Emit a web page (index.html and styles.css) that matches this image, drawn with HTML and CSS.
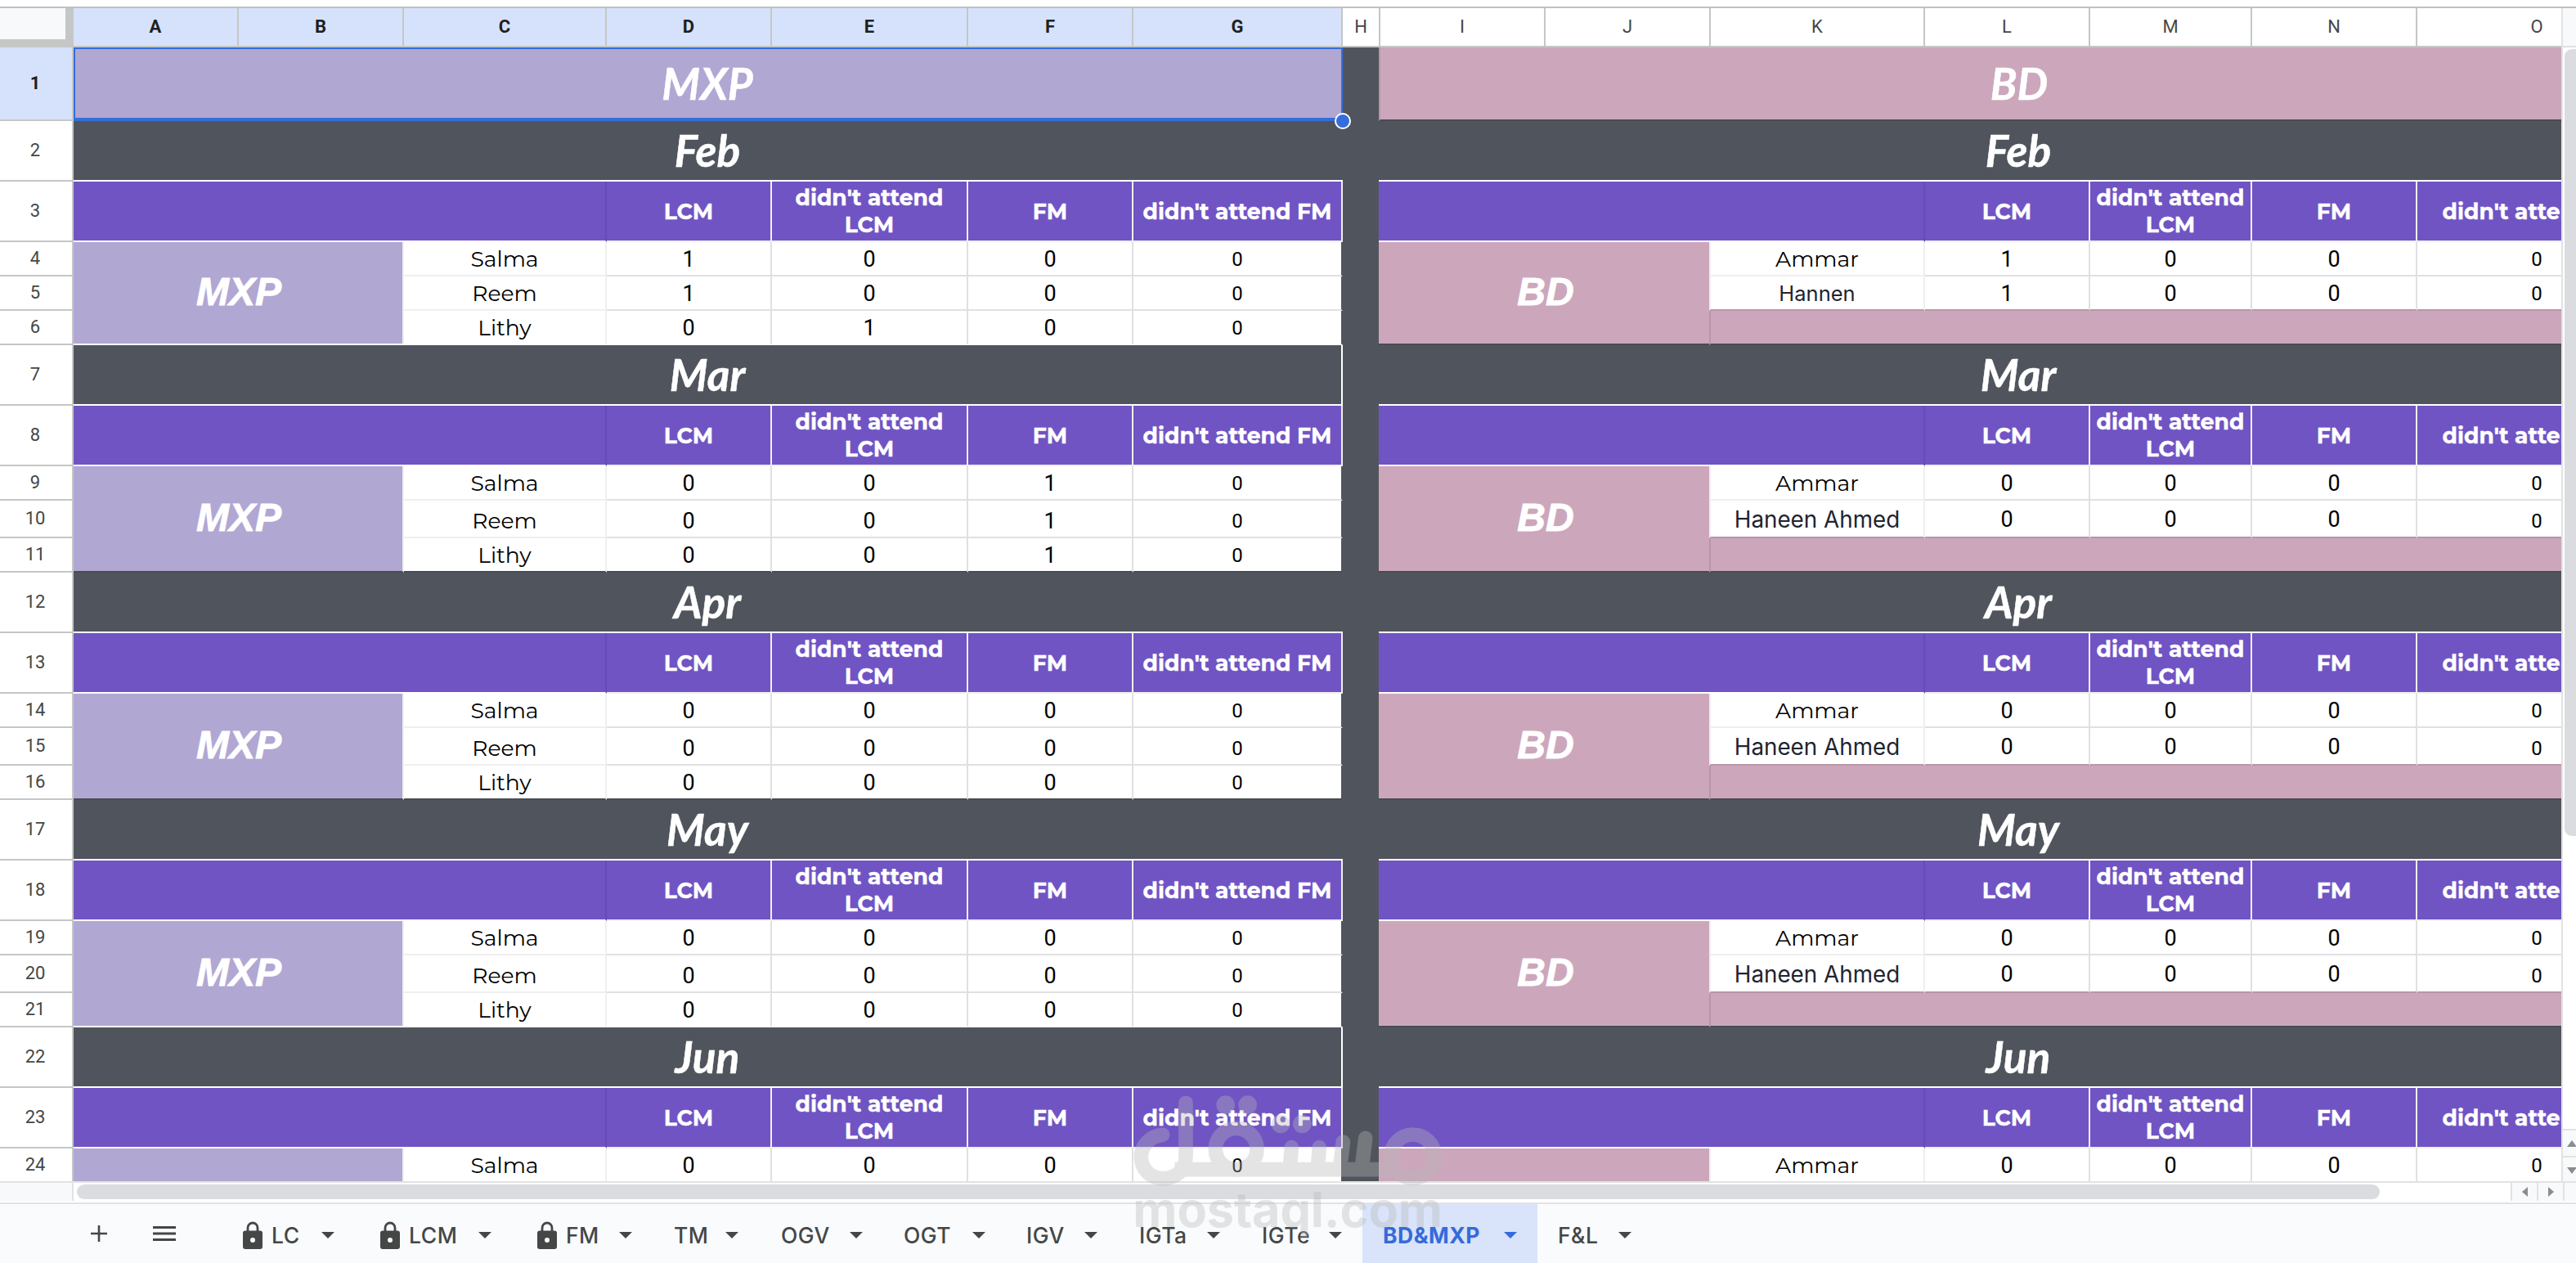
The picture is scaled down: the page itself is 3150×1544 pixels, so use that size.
FILE: index.html
```html
<!DOCTYPE html>
<html lang="en">
<head>
  <meta charset="UTF-8">
  <meta name="viewport" content="width=device-width, initial-scale=1.0">
  <title>BD&amp;MXP</title>
  <link rel="stylesheet" href="styles.css">
</head>
<body>
  <div class="app">
    <div class="sheet">
      <div class="col-heads">
        <div class="corner"></div>
        <div class="col selected">A</div>
        <div class="col selected">B</div>
        <div class="col selected">C</div>
        <div class="col selected">D</div>
        <div class="col selected">E</div>
        <div class="col selected">F</div>
        <div class="col selected">G</div>
        <div class="col">H</div>
        <div class="col">I</div>
        <div class="col">J</div>
        <div class="col">K</div>
        <div class="col">L</div>
        <div class="col">M</div>
        <div class="col">N</div>
        <div class="col">O</div>
      </div>
      <div class="grid-body">
        <div class="row-heads" id="row-heads"></div>
        <div class="table mxp" id="mxp">
          <div class="title">MXP<span class="handle"></span></div>
        </div>
        <div class="divider"></div>
        <div class="table bd" id="bd">
          <div class="title">BD</div>
        </div>
      </div>
    </div>
    <div class="v-scroll">
      <div class="v-top"></div>
      <div class="v-track"><div class="v-thumb"></div></div>
      <div class="v-btn"><svg width="12" height="8" viewBox="0 0 12 8"><path d="M6 0l6 8H0z" fill="#8a8d8f"/></svg></div>
      <div class="v-btn"><svg width="12" height="8" viewBox="0 0 12 8"><path d="M6 8l6-8H0z" fill="#8a8d8f"/></svg></div>
    </div>
  </div>

  <div class="h-scroll">
    <div class="h-corner"></div>
    <div class="h-track"><div class="h-thumb"></div></div>
    <div class="h-btn"><svg width="7" height="12" viewBox="0 0 7 12"><path d="M0 6l7-6v12z" fill="#8a8d8f"/></svg></div>
    <div class="h-btn"><svg width="7" height="12" viewBox="0 0 7 12"><path d="M7 6L0 0v12z" fill="#8a8d8f"/></svg></div>
    <div class="h-end"></div>
  </div>

  <div class="tabs">
    <svg class="plus" width="20" height="20" viewBox="0 0 20 20"><path d="M10 0v20M0 10h20" stroke="#444746" stroke-width="2.6"/></svg>
    <svg class="menu" width="28" height="18" viewBox="0 0 28 18"><path d="M0 1.5h28M0 9h28M0 16.5h28" stroke="#444746" stroke-width="3"/></svg>
    <div class="tab-list" id="tab-list"></div>
  </div>

  <svg class="watermark" width="460" height="244" viewBox="0 0 1380 732">
    <g opacity="0.36" fill="none" stroke="#b7b7b7" stroke-width="53">
      <path d="M245 262C198 266 166 302 166 343C166 388 202 422 246 422C296 422 330 388 330 342V145" stroke-linecap="round"/>
      <path d="M290 389H1110"/>
      <circle cx="515" cy="314" r="76"/>
      <path d="M718 308L712 385M820 308L814 385M907 288L896 385M989 274L976 385" stroke-linecap="round"/>
      <circle cx="1163" cy="341" r="80"/>
      <g fill="#b7b7b7" stroke="none">
        <circle cx="476" cy="152" r="34"/>
        <circle cx="557" cy="152" r="34"/>
        <circle cx="678" cy="222" r="34"/>
        <circle cx="757" cy="222" r="34"/>
        <text x="136" y="600" textLength="1136">mostaql.com</text>
      </g>
    </g>
  </svg>

  <script src="script.js"></script>
</body>
</html>
```
FILE: styles.css
```css
:root {
  --line: #c4c7c5;
  --grid: #e0e0e2;
  --soft: #efefef;
  --dark: #50555d;
  --dark-line: #484c53;
  --purple: #7054c4;
  --purple-line: #664bb5;
  --lilac: #b1a7d3;
  --pink: #cca7bc;
  --pink-line: #b896a9;
  --blue: #356ddb;
  --text: #444746;
}
* { box-sizing: border-box; }
body { margin: 0; width: 3150px; height: 1544px; overflow: hidden; background: #fff; font-family: Roboto, Arial, sans-serif; color: var(--text); position: relative; }
.app { display: flex; height: 1438px; margin-top: 8px; border-top: 2px solid #c0c0c0; }
.sheet { width: 3132px; overflow: hidden; display: flex; flex-direction: column; }

.col-heads { display: grid; grid-template-columns: 90px 202px 202px 248px 202px 240px 202px 256px 46px 202px 202px 262px 202px 198px 202px 294px; width: 3250px; height: 48px; flex: none; }
.col { border-right: 2px solid var(--line); border-bottom: 2px solid var(--line); display: flex; align-items: center; justify-content: center; font-size: 22px; padding-bottom: 1px; }
.col.selected { background: #d6e2fb; color: #1f1f1f; font-weight: 700; }
.corner { background: #f8f9fa; border-right: 10px solid var(--line); border-bottom: 10px solid var(--line); }

.grid-body { display: flex; width: 3250px; height: 1388px; overflow: hidden; }
.row-heads { width: 90px; flex: none; border-right: 2px solid var(--line); }
.row-head { height: 42px; border-bottom: 2px solid var(--line); display: flex; align-items: center; justify-content: center; font-size: 22px; padding-bottom: 1px; padding-right: 2px; }
.row-head.first { height: 90px; background: #d6e2fb; color: #1f1f1f; font-weight: 700; }
.row-head.tall { height: 74px; }
.row-head.mid { height: 46px; }
.divider { width: 44px; background: var(--dark); flex: none; }

.table { flex: none; }
.mxp { width: 1552px; background: var(--dark); }
.bd { width: 1564px; background: var(--dark); }
.title, .month { display: flex; align-items: center; justify-content: center; color: #fff; font-family: Lato, sans-serif; font-weight: 700; font-style: italic; font-size: 53.3px; line-height: 1; -webkit-text-stroke: 0.5px #fff; }
.title { height: 90px; padding-bottom: 1px; }
.mxp .title { background: var(--lilac); border: 2px solid var(--blue); border-bottom-width: 4px; position: relative; padding: 0 2px 0 0; }
.bd .title { background: var(--pink); border-bottom: 2px solid var(--dark-line); border-left: 2px solid var(--pink-line); }
.handle { position: absolute; right: -12px; bottom: -14px; width: 20px; height: 20px; border-radius: 50%; background: var(--blue); border: 2px solid #fff; }
.month { height: 74px; background: var(--dark); border-bottom: 2px solid #fff; padding-right: 2px; }
.bd .month { padding: 0; }

.block { display: grid; grid-template-rows: 74px 74px 42px 46px 42px; }
.block.even { grid-template-rows: 74px 74px 42px 42px 42px; }
.mxp .block { grid-template-columns: 202px 202px 248px 202px 240px 202px 256px; }
.bd .block { grid-template-columns: 204px 202px 262px 202px 198px 202px 294px; }
.month { grid-column: 1 / -1; }
.mxp .edged .month { border-right: 2px solid #fff; padding: 0; }

.blank, .label { background: var(--purple); border-bottom: 2px solid var(--soft); border-right: 2px solid var(--soft); }
.blank { grid-column: span 3; border-right-color: var(--purple-line); border-bottom-color: #fff; }
.label { display: flex; align-items: center; justify-content: center; text-align: center; color: #fff; font-family: Montserrat, Inter, sans-serif; font-weight: 700; font-size: 26.6px; line-height: 32.6px; padding-top: 2px; -webkit-text-stroke: 0.4px #fff; }

.side { grid-column: span 2; grid-row: 3 / span 3; display: flex; align-items: center; justify-content: center; color: #fff; font-family: "Liberation Sans", Arial, sans-serif; font-weight: 700; font-style: italic; font-size: 48px; padding: 0 0 3px 2px; border-bottom: 2px solid var(--dark-line); -webkit-text-stroke: 0.9px #fff; }
.mxp .side { background: var(--lilac); border-right: 2px solid var(--soft); }
.bd .side { background: var(--pink); }

.name, .num { background: #fff; display: flex; align-items: center; justify-content: center; color: #000; font-size: 27px; border-right: 2px solid var(--grid); border-bottom: 2px solid var(--grid); padding-top: 1px; }
.name { font-family: Montserrat, Inter, sans-serif; font-size: 26.6px; border-color: var(--soft); }
.name.plain { font-family: Inter, sans-serif; font-size: 25.5px; color: #1f2430; }
.name.large { font-family: Inter, sans-serif; font-size: 27.8px; color: #1f2430; }
.num.last { font-size: 24px; padding-top: 2px; }
.mxp .num.last { border-right-color: var(--dark); }
.mxp .block:not(.even) .second { padding-top: 5px; }
.bd .block:not(.even) .second.last { padding-top: 5px; }
.mxp .third { border-bottom-color: var(--dark-line); }
.mxp .white-end .third, .mxp .white-end .side { border-bottom-color: #fff; }
.bd .second { border-bottom-color: var(--pink-line); }
.bd .name { border-left: 2px solid var(--soft); margin-left: -2px; }
.filler { grid-column: 3 / -1; margin-left: -2px; background: var(--pink); border-left: 2px solid var(--pink-line); border-bottom: 2px solid var(--dark-line); }

.v-scroll { width: 18px; border-left: 2px solid #e1e3e1; display: flex; flex-direction: column; overflow: hidden; }
.v-top { height: 48px; background: #f8f9fa; border-bottom: 2px solid var(--grid); flex: none; }
.v-track { flex: 1; padding: 2px 0 0 2px; }
.v-thumb { width: 22px; height: 962px; border-radius: 9px; background: #dadce0; }
.v-btn { height: 33px; background: #f8f9fa; border-top: 2px solid #e1e3e1; display: flex; align-items: center; padding-left: 5px; flex: none; }
.v-btn svg { flex: none; }

.h-scroll { display: flex; height: 28px; margin-top: -2px; border-top: 2px solid #e1e3e1; border-bottom: 2px solid #e1e3e1; position: relative; background: #fff; }
.h-corner { width: 90px; height: 22px; background: #f8f9fa; border-right: 2px solid #e1e3e1; }
.h-track { width: 2980px; padding: 2px 0 0 4px; }
.h-thumb { width: 2816px; height: 18px; border-radius: 9px; background: #dadce0; }
.h-btn { width: 32px; height: 22px; background: #f8f9fa; border-left: 2px solid #e1e3e1; display: flex; align-items: center; justify-content: center; }
.h-end { flex: 1; height: 22px; background: #f8f9fa; border-left: 2px solid #e1e3e1; }

.tabs { height: 72px; background: #f9fbfd; display: flex; align-items: center; padding: 0 0 0 111px; }
.menu { margin: 0 57px 0 56px; }
.tab-list { display: flex; height: 72px; }
.tab { display: flex; align-items: center; justify-content: space-between; padding: 4px 25px 0 25px; font-family: Inter, sans-serif; font-size: 26.5px; font-weight: 500; letter-spacing: 0.5px; white-space: nowrap; }
.tab.active { background: #d9e3f9; color: #356adb; font-weight: 700; }
.tab-name { display: flex; align-items: center; gap: 11px; }
.arrow { width: 16px; height: 8px; flex: none; }
.tab:nth-child(1) { width: 168px; padding-right: 31px; }
.tab:nth-child(2) { width: 192px; padding-right: 31px; }
.tab:nth-child(3) { width: 167px; padding-right: 26px; }
.tab:nth-child(4) { width: 131px; padding-right: 27px; }
.tab:nth-child(5) { width: 150px; }
.tab:nth-child(6) { width: 150px; }
.tab:nth-child(7) { width: 138px; padding-right: 26px; }
.tab:nth-child(8) { width: 150px; padding-right: 26px; }
.tab:nth-child(9) { width: 148px; }
.tab:nth-child(10) { width: 214px; }
.tab:nth-child(11) { width: 140px; }

.watermark { position: absolute; left: 1340px; top: 1300px; }
.watermark text { font-family: Inter, sans-serif; font-weight: 700; font-size: 178px; }
```
FILE: script.js
```js
const months = ['Feb', 'Mar', 'Apr', 'May', 'Jun'];
const labels = ['LCM', "didn't attend<br>LCM", 'FM', "didn't attend FM"];

// attendance per month: LCM, didn't attend LCM, FM, didn't attend FM
const zero = [0, 0, 0, 0];
const mxpData = {
  Feb: [[1, 0, 0, 0], [1, 0, 0, 0], [0, 1, 0, 0]],
  Mar: [[0, 0, 1, 0], [0, 0, 1, 0], [0, 0, 1, 0]]
};
const bdData = {
  Feb: [[1, 0, 0, 0], [1, 0, 0, 0]]
};

const order = ['first-row', 'second', 'third'];

function block(month, team, people, data) {
  let cls = 'block';
  if (month === 'Feb') cls += ' even';
  if (month === 'Feb' || month === 'May') cls += ' white-end';
  if (month === 'Mar' || month === 'Jun') cls += ' edged';
  let html = `<div class="${cls}"><div class="month">${month}</div><div class="blank"></div>`;
  labels.forEach(l => { html += `<div class="label"><span>${l}</span></div>`; });
  html += `<div class="side">${month === 'Jun' ? '' : team}</div>`;
  people.forEach((p, i) => {
    let nameCls = 'name ' + order[i];
    if (p === 'Hannen') nameCls += ' plain';
    if (p === 'Haneen Ahmed') nameCls += ' large';
    html += `<div class="${nameCls}">${p}</div>`;
    (data[month] ? data[month][i] : zero).forEach((n, j) => {
      html += `<div class="num ${order[i]}${j === 3 ? ' last' : ''}">${n}</div>`;
    });
  });
  if (people.length === 2) html += '<div class="filler"></div>';
  return html + '</div>';
}

months.forEach(m => {
  let mxp = ['Salma', 'Reem', 'Lithy'];
  let bd = ['Ammar', m === 'Feb' ? 'Hannen' : 'Haneen Ahmed'];
  // only the first row of June is in view
  if (m === 'Jun') {
    mxp = mxp.slice(0, 1);
    bd = bd.slice(0, 1);
  }
  document.getElementById('mxp').insertAdjacentHTML('beforeend', block(m, 'MXP', mxp, mxpData));
  document.getElementById('bd').insertAdjacentHTML('beforeend', block(m, 'BD', bd, bdData));
});

// row numbers
let rows = '<div class="row-head first">1</div>';
for (let r = 2; r <= 24; r++) {
  const k = (r - 2) % 5;
  const size = k < 2 ? ' tall' : (k === 3 && r > 6 ? ' mid' : '');
  rows += `<div class="row-head${size}">${r}</div>`;
}
document.getElementById('row-heads').innerHTML = rows;

// sheet tabs
const lock = '<svg width="24" height="34" viewBox="0 0 24 34"><path d="M6 13V8a6 6 0 0 1 12 0v5" fill="none" stroke="#444746" stroke-width="2.8"/><path d="M3 11.500h18a3 3 0 0 1 3 3V31a3 3 0 0 1-3 3H3a3 3 0 0 1-3-3V14.500a3 3 0 0 1 3-3zM12 20a3 3 0 1 0 0 6 3 3 0 0 0 0-6z" fill="#444746" fill-rule="evenodd"/></svg>';
const tabs = ['LC', 'LCM', 'FM', 'TM', 'OGV', 'OGT', 'IGV', 'IGTa', 'IGTe', 'BD&amp;MXP', 'F&amp;L'];
document.getElementById('tab-list').innerHTML = tabs.map((t, i) => `
  <div class="tab${i === 9 ? ' active' : ''}">
    <span class="tab-name">${i < 3 ? lock : ''}${t}</span>
    <svg class="arrow" viewBox="0 0 16 8"><path d="M0 0h16L8 8z" fill="currentColor"/></svg>
  </div>`).join('');
```
